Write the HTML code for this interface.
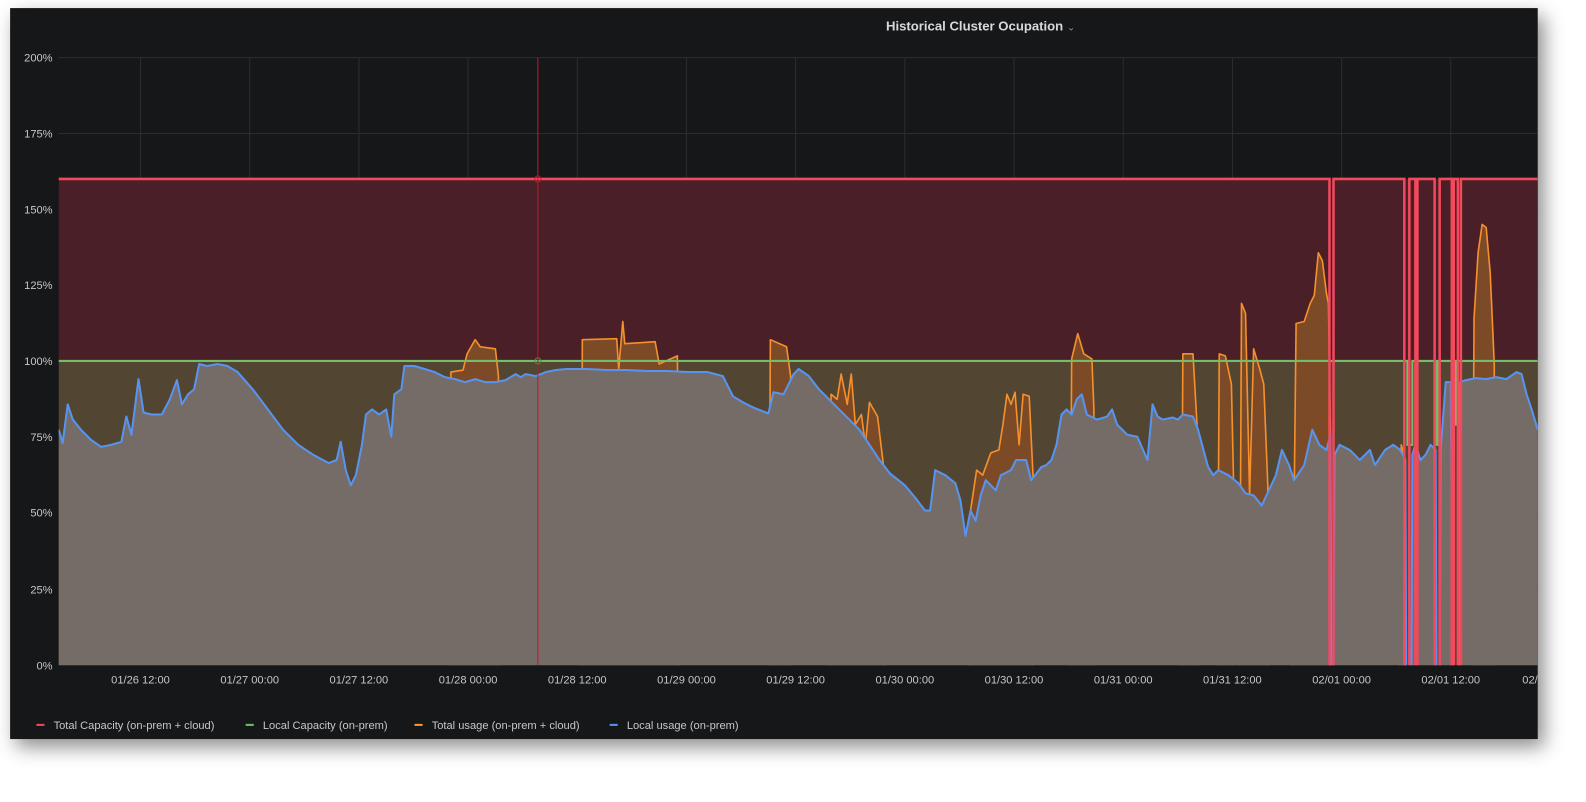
<!DOCTYPE html>
<html><head><meta charset="utf-8"><style>
html,body{margin:0;padding:0;background:#fff;width:1586px;height:793px;overflow:hidden;font-family:"Liberation Sans",sans-serif}
#wrap{position:absolute;left:0;top:0;width:1586px;height:793px;transform:scale(1.011);transform-origin:0 0}
#panel{position:absolute;left:10px;top:8px;width:1511px;height:723px;background:#161719;box-shadow:6px 8px 18px rgba(0,0,0,.45)}
svg{position:absolute;left:0;top:0}
</style></head><body><div id="wrap">
<div id="panel"></div>
<svg width="1586" height="793" viewBox="0 0 1586 793" font-family="Liberation Sans, sans-serif">
<defs><clipPath id="c"><rect x="58" y="50" width="1463" height="608"/></clipPath></defs>
<text x="970" y="30" fill="#d8d9da" font-size="13" font-weight="bold" text-anchor="middle">Historical Cluster Ocupation <tspan fill="#8e8e8e" font-weight="normal" font-size="10">⌄</tspan></text>
<g stroke="#2c2d30" stroke-width="1">
<line x1="58" x2="1521" y1="57" y2="57"/><line x1="58" x2="1521" y1="132" y2="132"/><line x1="58" x2="1521" y1="207" y2="207"/><line x1="58" x2="1521" y1="282" y2="282"/><line x1="58" x2="1521" y1="357" y2="357"/><line x1="58" x2="1521" y1="432" y2="432"/><line x1="58" x2="1521" y1="507" y2="507"/><line x1="58" x2="1521" y1="583" y2="583"/>
</g>
<g stroke="#2c2d30"><line x1="139" x2="139" y1="57" y2="658"/><line x1="247" x2="247" y1="57" y2="658"/><line x1="355" x2="355" y1="57" y2="658"/><line x1="463" x2="463" y1="57" y2="658"/><line x1="571" x2="571" y1="57" y2="658"/><line x1="679" x2="679" y1="57" y2="658"/><line x1="787" x2="787" y1="57" y2="658"/><line x1="895" x2="895" y1="57" y2="658"/><line x1="1003" x2="1003" y1="57" y2="658"/><line x1="1111" x2="1111" y1="57" y2="658"/><line x1="1219" x2="1219" y1="57" y2="658"/><line x1="1327" x2="1327" y1="57" y2="658"/><line x1="1435" x2="1435" y1="57" y2="658"/></g>
<g clip-path="url(#c)">
<rect x="58" y="177" width="1463" height="180" fill="#4a1f27"/>
<rect x="58" y="357" width="1463" height="301" fill="#524633"/>
<g fill="#7d4a27" stroke="#f6902a" stroke-width="1.6" stroke-linejoin="round">
<polygon points="445,680 446,368 458,366 462,350 470,336 475,343 490,345 493,372 493,680"/>
<polygon points="575,680 576,336 610,335 612,365 616,318 618,340 648,338 652,360 670,352 672,680"/>
<polygon points="760,680 762,336 778,343 782,372 782,680"/>
<polygon points="820,680 822,390 828,395 832,370 838,400 842,370 846,420 852,410 856,440 860,398 868,412 875,470 875,680"/>
<polygon points="958,680 960,505 966,465 972,470 980,448 988,445 992,420 996,390 1000,400 1004,388 1008,440 1012,390 1018,392 1022,475 1022,680"/>
<polygon points="1058,680 1060,355 1066,330 1072,350 1080,355 1082,405 1082,680"/>
<polygon points="1168,680 1170,350 1180,350 1184,420 1186,680"/>
<polygon points="1204,680 1206,350 1212,352 1218,380 1220,470 1220,680"/>
<polygon points="1226,680 1228,300 1232,310 1236,490 1240,345 1246,365 1250,380 1254,480 1254,680"/>
<polygon points="1278,680 1282,320 1290,318 1296,300 1300,292 1304,250 1308,258 1312,290 1314,300 1316,430 1316,680"/>
<polygon points="1384,680 1386,440 1390,455 1390,680"/>
<polygon points="1456,680 1458,315 1462,250 1466,222 1470,225 1474,270 1478,360 1478,680"/>
</g>
<polygon fill="#766c67" points="58,680 58,425 62,438 67,400 72,415 80,425 90,435 100,442 110,440 120,437 125,412 130,430 137,375 142,408 150,410 160,410 168,395 175,376 180,400 186,390 192,385 197,360 205,362 215,360 225,362 235,368 250,385 265,405 280,425 295,440 310,450 325,458 333,455 337,437 342,465 347,480 352,470 358,440 362,410 368,405 375,410 382,405 387,432 390,390 397,385 400,362 410,362 420,365 430,368 440,373 450,375 460,378 470,375 480,378 490,378 500,376 510,370 515,373 520,370 530,372 540,368 550,366 560,365 580,365 600,366 620,366 640,367 660,367 680,368 700,368 715,372 725,392 735,398 745,403 760,409 765,388 775,390 785,370 790,365 800,372 810,385 820,395 830,405 840,415 850,425 860,440 870,455 880,468 895,480 905,492 915,505 920,505 925,465 935,470 945,478 950,495 955,530 960,505 965,515 970,490 975,475 985,485 990,470 1000,465 1005,455 1015,455 1020,475 1030,462 1035,460 1040,455 1045,440 1050,410 1055,405 1060,410 1065,395 1070,390 1075,410 1085,415 1095,412 1100,405 1105,420 1115,430 1125,432 1135,455 1140,400 1145,412 1150,415 1160,413 1165,415 1170,410 1180,412 1185,425 1195,462 1200,470 1205,465 1215,470 1225,478 1232,488 1240,490 1248,500 1255,485 1262,470 1268,445 1275,460 1280,475 1290,460 1298,425 1305,440 1312,445 1316,430 1317,680 1319,680 1320,450 1325,440 1335,445 1345,455 1355,445 1360,460 1370,445 1378,440 1385,445 1390,455 1391,680 1396,680 1397,450 1400,440 1405,455 1410,450 1415,440 1420,445 1421,680 1424,680 1425,445 1430,378 1435,378 1437,680 1443,680 1444,378 1450,376 1460,374 1470,375 1480,373 1490,375 1500,368 1505,370 1510,390 1515,405 1521,425 1521,680"/>
<polyline fill="none" stroke="#5794f2" stroke-width="2" stroke-linejoin="round" points="58,425 62,438 67,400 72,415 80,425 90,435 100,442 110,440 120,437 125,412 130,430 137,375 142,408 150,410 160,410 168,395 175,376 180,400 186,390 192,385 197,360 205,362 215,360 225,362 235,368 250,385 265,405 280,425 295,440 310,450 325,458 333,455 337,437 342,465 347,480 352,470 358,440 362,410 368,405 375,410 382,405 387,432 390,390 397,385 400,362 410,362 420,365 430,368 440,373 450,375 460,378 470,375 480,378 490,378 500,376 510,370 515,373 520,370 530,372 540,368 550,366 560,365 580,365 600,366 620,366 640,367 660,367 680,368 700,368 715,372 725,392 735,398 745,403 760,409 765,388 775,390 785,370 790,365 800,372 810,385 820,395 830,405 840,415 850,425 860,440 870,455 880,468 895,480 905,492 915,505 920,505 925,465 935,470 945,478 950,495 955,530 960,505 965,515 970,490 975,475 985,485 990,470 1000,465 1005,455 1015,455 1020,475 1030,462 1035,460 1040,455 1045,440 1050,410 1055,405 1060,410 1065,395 1070,390 1075,410 1085,415 1095,412 1100,405 1105,420 1115,430 1125,432 1135,455 1140,400 1145,412 1150,415 1160,413 1165,415 1170,410 1180,412 1185,425 1195,462 1200,470 1205,465 1215,470 1225,478 1232,488 1240,490 1248,500 1255,485 1262,470 1268,445 1275,460 1280,475 1290,460 1298,425 1305,440 1312,445 1316,430 1317,680 1319,680 1320,450 1325,440 1335,445 1345,455 1355,445 1360,460 1370,445 1378,440 1385,445 1390,455 1391,680 1396,680 1397,450 1400,440 1405,455 1410,450 1415,440 1420,445 1421,680 1424,680 1425,445 1430,378 1435,378 1437,680 1443,680 1444,378 1450,376 1460,374 1470,375 1480,373 1490,375 1500,368 1505,370 1510,390 1515,405 1521,425"/>
<polyline fill="none" stroke="#73bf69" stroke-width="2" points="58,357 1392,357 1392,440 1397,440 1397,357 1420,357 1420,440 1422,440 1422,357 1440,357 1440,420 1442,420 1442,357 1521,357"/>
<polyline fill="none" stroke="#f2495c" stroke-width="2.5" points="58,177 1315,177 1315,680 1319,680 1319,177 1389,177 1389,680 1394,680 1394,177 1400,177 1400,680 1402,680 1402,177 1419,177 1419,680 1424,680 1424,177 1436,177 1436,680 1438,680 1438,177 1442,177 1442,680 1445,680 1445,177 1521,177"/>
</g>
<line x1="532" x2="532" y1="57" y2="658" stroke="#c4162a" stroke-width="1"/>
<circle cx="532" cy="177" r="3" fill="none" stroke="#c4162a"/><circle cx="532" cy="357" r="3" fill="none" stroke="#4a8a3a"/>
<g fill="#c7c7c7" font-size="11" text-anchor="end">
<text x="52" y="61">200%</text><text x="52" y="136">175%</text><text x="52" y="211">150%</text><text x="52" y="286">125%</text><text x="52" y="361">100%</text><text x="52" y="436">75%</text><text x="52" y="511">50%</text><text x="52" y="587">25%</text><text x="52" y="662">0%</text>
</g>
<g fill="#c7c7c7" font-size="11" text-anchor="middle">
<text x="139" y="676">01/26 12:00</text><text x="247" y="676">01/27 00:00</text><text x="355" y="676">01/27 12:00</text><text x="463" y="676">01/28 00:00</text><text x="571" y="676">01/28 12:00</text><text x="679" y="676">01/29 00:00</text><text x="787" y="676">01/29 12:00</text><text x="895" y="676">01/30 00:00</text><text x="1003" y="676">01/30 12:00</text><text x="1111" y="676">01/31 00:00</text><text x="1219" y="676">01/31 12:00</text><text x="1327" y="676">02/01 00:00</text><text x="1435" y="676">02/01 12:00</text><text x="1521" y="676" text-anchor="end">02/</text>
</g>
<g font-size="11" fill="#c7c7c7">
<rect x="36" y="716" width="8" height="2" fill="#f2495c"/><text x="53" y="721">Total Capacity (on-prem + cloud)</text>
<rect x="243" y="716" width="8" height="2" fill="#73bf69"/><text x="260" y="721">Local Capacity (on-prem)</text>
<rect x="410" y="716" width="8" height="2" fill="#ff9830"/><text x="427" y="721">Total usage (on-prem + cloud)</text>
<rect x="603" y="716" width="8" height="2" fill="#5794f2"/><text x="620" y="721">Local usage (on-prem)</text>
</g>
</svg>
</div></body></html>
